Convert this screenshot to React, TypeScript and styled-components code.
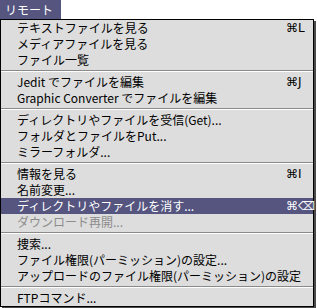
import styled, { createGlobalStyle } from "styled-components";

const GlobalStyle = createGlobalStyle`
  html, body {
    margin: 0;
    padding: 0;
    background: #ffffff;
  }

  body {
    font-family: "Noto Sans CJK JP", "Noto Sans", "DejaVu Sans", sans-serif;
    font-size: 12px;
    -webkit-font-smoothing: none;
  }
`;

const HILITE = "#55557f";

const Wrapper = styled.div`
  display: flex;
  flex-direction: column;
  align-items: flex-start;
  width: 317px;
  height: 308px;
`;

const MenuTitle = styled.div`
  box-sizing: border-box;
  width: 61px;
  height: 19px;
  padding-left: 5px;
  background-color: ${HILITE};
  color: #ffffff;
  line-height: 19px;
`;

const Panel = styled.div`
  box-sizing: border-box;
  width: 314px;
  border: 1px solid #000000;
  background-color: #dddddd;
  box-shadow: 2px 2px 0 #4a4a4a;
  display: flex;
  flex-direction: column;
`;

const Item = styled.div<{ $active?: boolean; $disabled?: boolean }>`
  display: flex;
  align-items: center;
  height: 16px;
  line-height: 16px;
  padding-left: 16px;
  white-space: nowrap;
  background-color: ${(p) => (p.$active ? HILITE : "transparent")};
  color: ${(p) => (p.$active ? "#ffffff" : p.$disabled ? "#8c8c8c" : "#000000")};
`;

const Label = styled.span`
  flex: 1;
`;

const Shortcut = styled.span`
  width: 27px;
  font-family: "DejaVu Sans", sans-serif;
  font-size: 12px;
`;

const Separator = styled.div`
  margin: 2px 0;
  border-top: 1px solid #8a8a8a;
  border-bottom: 1px solid #ffffff;
`;

type Entry =
  | { sep: true }
  | { label: string; key?: string; active?: boolean; disabled?: boolean };

const entries: Entry[] = [
  { label: "テキストファイルを見る", key: "⌘L" },
  { label: "メディアファイルを見る" },
  { label: "ファイル一覧" },
  { sep: true },
  { label: "Jedit でファイルを編集", key: "⌘J" },
  { label: "Graphic Converter でファイルを編集" },
  { sep: true },
  { label: "ディレクトリやファイルを受信(Get)..." },
  { label: "フォルダとファイルをPut..." },
  { label: "ミラーフォルダ..." },
  { sep: true },
  { label: "情報を見る", key: "⌘I" },
  { label: "名前変更..." },
  { label: "ディレクトリやファイルを消す...", key: "⌘⌫", active: true },
  { label: "ダウンロード再開...", disabled: true },
  { sep: true },
  { label: "捜索..." },
  { label: "ファイル権限(パーミッション)の設定..." },
  { label: "アップロードのファイル権限(パーミッション)の設定" },
  { sep: true },
  { label: "FTPコマンド..." },
];

function App() {
  return (
    <Wrapper>
      <GlobalStyle />
      <MenuTitle>リモート</MenuTitle>
      <Panel>
        {entries.map((e, i) =>
          "sep" in e ? (
            <Separator key={i} />
          ) : (
            <Item key={i} $active={e.active} $disabled={e.disabled}>
              <Label>{e.label}</Label>
              {e.key && <Shortcut>{e.key}</Shortcut>}
            </Item>
          )
        )}
      </Panel>
    </Wrapper>
  );
}

export default App;
